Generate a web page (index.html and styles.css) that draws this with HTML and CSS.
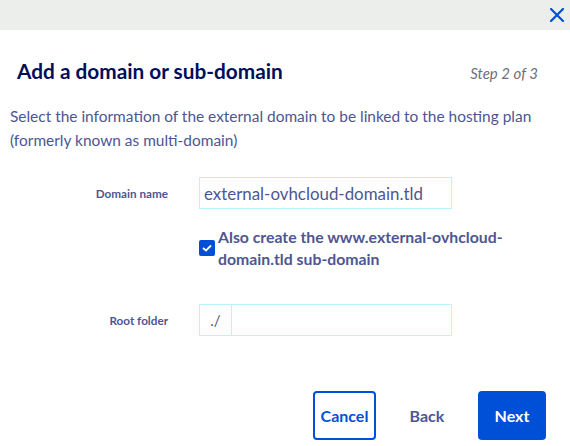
FILE: index.html
```html
<!DOCTYPE html>
<html>
<head>
<meta charset="utf-8">
<link rel="stylesheet" href="styles.css">
</head>
<body>
<div class="modal">
  <div class="topbar">
    <button class="close" aria-label="Close">
      <svg width="14" height="14" viewBox="0 0 14 14"><path d="M1 1 L13 13 M13 1 L1 13" stroke="#0050d7" stroke-width="2.2" stroke-linecap="square" fill="none"/></svg>
    </button>
  </div>
  <div class="header">
    <h1 class="title">Add a domain or sub-domain</h1>
    <span class="step">Step 2 of 3</span>
  </div>
  <p class="desc">Select the information of the external domain to be linked to the hosting plan (formerly known as multi-domain)</p>
  <div class="form">
    <div class="row">
      <label class="label">Domain name</label>
      <div class="input">external-ovhcloud-domain.tld</div>
    </div>
    <div class="row check-row">
      <span class="label"></span>
      <div class="check">
        <span class="box"><svg width="10" height="8" viewBox="0 0 10 8"><path d="M1 4 L4 6.5 L9 1.5" stroke="#fff" stroke-width="1.8" fill="none"/></svg></span>
        <span class="check-text">Also create the www.external-ovhcloud-domain.tld sub-domain</span>
      </div>
    </div>
    <div class="row root-row">
      <label class="label">Root folder</label>
      <div class="group">
        <span class="prefix">./</span>
        <span class="field"></span>
      </div>
    </div>
  </div>
  <div class="actions">
    <button class="btn cancel">Cancel</button>
    <button class="btn back">Back</button>
    <button class="btn next">Next</button>
  </div>
</div>
</body>
</html>
```
FILE: styles.css
```css
* { box-sizing: border-box; }
html, body { margin: 0; padding: 0; background: #fff; }
body { font-family: "Source Sans Pro", Lato, "Open Sans", sans-serif; color: #4d5693; width: 570px; height: 446px; overflow: hidden; }
.topbar { height: 30px; background: #eceeec; display: flex; justify-content: flex-end; align-items: center; padding-right: 6px; }
.close { background: none; border: 0; padding: 0; width: 14px; height: 14px; display: flex; margin-top: 0; }
.header { display: flex; justify-content: space-between; align-items: baseline; padding: 28px 32px 0 17px; }
.title { margin: 0; font-size: 20.8px; font-weight: 700; color: #000e5c; }
.step { font-style: italic; font-size: 15px; color: #6c6f7d; }
.desc { margin: 21px 0 0 10px; font-size: 15.45px; line-height: 24px; color: #4d5693; }
.form { margin-top: 25px; display: flex; flex-direction: column; }
.row { display: flex; align-items: center; gap: 31px; }
.label { width: 168px; text-align: right; font-size: 11.7px; font-weight: 700; color: #4d5693; }
.input { width: 253px; height: 32px; border: 1px solid #bef1ff; padding: 0 4px; display: flex; align-items: center; font-size: 16.9px; color: #4d5693; }
.check-row { margin-top: 17px; }
.check { display: flex; align-items: center; width: 345px; }
.box { width: 16px; height: 16px; border-radius: 2px; background: #0050d7; display: flex; align-items: center; justify-content: center; flex: none; margin-right: 3px; }
.check-text { font-size: 15.8px; font-weight: 700; line-height: 22px; color: #4d5693; }
.root-row { margin-top: 34px; }
.group { width: 253px; height: 32px; border: 1px solid #bef1ff; display: flex; }
.prefix { width: 32px; border-right: 1px solid #bef1ff; display: flex; align-items: center; justify-content: center; font-size: 15px; color: #4d5693; }
.field { flex: 1; }
.actions { display: flex; justify-content: flex-end; align-items: center; padding-right: 24px; margin-top: 55px; gap: 0; }
.btn { font-family: inherit; font-size: 16px; font-weight: 700; height: 49px; border-radius: 4px; cursor: pointer; }
.cancel { width: 63px; border: 2px solid #0050d7; background: #fff; color: #0050d7; padding: 0; }
.back { background: none; border: 0; color: #4d5693; width: 102px; padding: 0; }
.next { width: 68px; background: #0050d7; color: #fff; border: 0; padding: 0; }
```
